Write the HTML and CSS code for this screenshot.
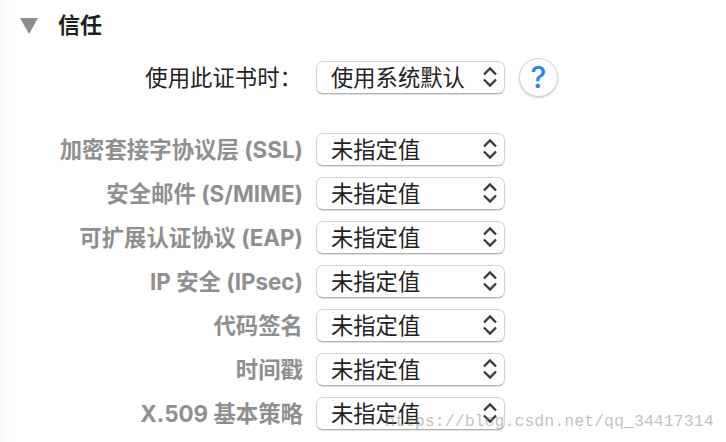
FILE: index.html
```html
<!DOCTYPE html>
<html lang="zh">
<head>
<meta charset="utf-8">
<title>信任</title>
<link rel="stylesheet" href="styles.css">
</head>
<body>
<main class="panel">
  <header class="head">
    <svg class="tri" width="18" height="16" viewBox="0 0 18 16"><path d="M0 0H18L9 16Z" fill="#8c8c8c"/></svg>
    <h1 class="title">信任</h1>
  </header>
  <div class="row main-row">
    <span class="label dark">使用此证书时：</span>
    <div class="select"><span>使用系统默认</span><svg class="chev" width="16" height="22" viewBox="0 0 16 22"><path d="M2 8.5L8 2.5L14 8.5M2 13.5L8 19.5L14 13.5" fill="none" stroke="#3a3a3a" stroke-width="2.3"/></svg></div>
    <div class="help">?</div>
  </div>
  <div class="list">
    <div class="row"><span class="label">加密套接字协议层 (SSL)</span><div class="select"><span>未指定值</span><svg class="chev" width="16" height="22" viewBox="0 0 16 22"><path d="M2 8.5L8 2.5L14 8.5M2 13.5L8 19.5L14 13.5" fill="none" stroke="#3a3a3a" stroke-width="2.3"/></svg></div></div>
    <div class="row"><span class="label">安全邮件 (S/MIME)</span><div class="select"><span>未指定值</span><svg class="chev" width="16" height="22" viewBox="0 0 16 22"><path d="M2 8.5L8 2.5L14 8.5M2 13.5L8 19.5L14 13.5" fill="none" stroke="#3a3a3a" stroke-width="2.3"/></svg></div></div>
    <div class="row"><span class="label">可扩展认证协议 (EAP)</span><div class="select"><span>未指定值</span><svg class="chev" width="16" height="22" viewBox="0 0 16 22"><path d="M2 8.5L8 2.5L14 8.5M2 13.5L8 19.5L14 13.5" fill="none" stroke="#3a3a3a" stroke-width="2.3"/></svg></div></div>
    <div class="row"><span class="label">IP 安全 (IPsec)</span><div class="select"><span>未指定值</span><svg class="chev" width="16" height="22" viewBox="0 0 16 22"><path d="M2 8.5L8 2.5L14 8.5M2 13.5L8 19.5L14 13.5" fill="none" stroke="#3a3a3a" stroke-width="2.3"/></svg></div></div>
    <div class="row"><span class="label">代码签名</span><div class="select"><span>未指定值</span><svg class="chev" width="16" height="22" viewBox="0 0 16 22"><path d="M2 8.5L8 2.5L14 8.5M2 13.5L8 19.5L14 13.5" fill="none" stroke="#3a3a3a" stroke-width="2.3"/></svg></div></div>
    <div class="row"><span class="label">时间戳</span><div class="select"><span>未指定值</span><svg class="chev" width="16" height="22" viewBox="0 0 16 22"><path d="M2 8.5L8 2.5L14 8.5M2 13.5L8 19.5L14 13.5" fill="none" stroke="#3a3a3a" stroke-width="2.3"/></svg></div></div>
    <div class="row"><span class="label">X.509 基本策略</span><div class="select"><span>未指定值</span><svg class="chev" width="16" height="22" viewBox="0 0 16 22"><path d="M2 8.5L8 2.5L14 8.5M2 13.5L8 19.5L14 13.5" fill="none" stroke="#3a3a3a" stroke-width="2.3"/></svg></div></div>
  </div>
</main>
<div class="mark">https://blog.csdn.net/qq_34417314</div>
</body>
</html>
```

FILE: styles.css
```css
html, body {
  margin: 0;
  width: 726px;
  height: 442px;
  overflow: hidden;
  background: #fff;
}
body {
  position: relative;
  font-family: "Liberation Sans", "Noto Sans CJK SC", sans-serif;
  color: #222;
}
.panel {
  display: flex;
  flex-direction: column;
  padding-top: 13px;
  box-sizing: border-box;
  height: 442px;
  background: linear-gradient(to right, #f7f7f7, #fff 10px);
}
.head {
  display: flex;
  align-items: center;
  height: 26px;
  padding-left: 20px;
}
.tri { display: block; }
.title {
  margin: 0 0 0 20px;
  font-size: 22px;
  font-weight: 700;
  line-height: 26px;
  color: #1e1e1e;
}
.row {
  display: flex;
  align-items: center;
  height: 34px;
}
.main-row { margin-top: 21px; }
.list {
  display: flex;
  flex-direction: column;
  gap: 10px;
  margin-top: 38px;
}
.label {
  box-sizing: border-box;
  width: 303px;
  flex: none;
  margin-right: -1px;
  padding-top: 2px;
  text-align: right;
  font-family: Inter, "Noto Sans CJK SC", sans-serif;
  font-size: 22.4px;
  font-weight: 700;
  line-height: 30px;
  color: #8f8f8f;
  white-space: nowrap;
}
.label.dark {
  width: 302px;
  margin-right: 0;
  font-weight: 400;
  color: #222;
}
.select {
  box-sizing: border-box;
  display: flex;
  align-items: center;
  justify-content: space-between;
  width: 189px;
  height: 33px;
  margin-left: 14px;
  padding: 0 6px 0 14px;
  background: #fff;
  border: 1px solid #d6d6d6;
  border-bottom-color: #b0b0b0;
  border-radius: 7px;
  box-shadow: 0 1px 1px rgba(0,0,0,.12);
  font-size: 22.3px;
  line-height: 30px;
  color: #222;
  white-space: nowrap;
}
.select span { padding-top: 4px; }
.chev { display: block; flex: none; }
.help {
  box-sizing: border-box;
  width: 39px;
  height: 39px;
  margin-left: 14px;
  border: 1px solid #d4d4d4;
  border-radius: 50%;
  box-shadow: 0 1px 2px rgba(0,0,0,.2);
  background: #fff;
  color: #2f7ff0;
  font-family: Inter, "Liberation Sans", sans-serif;
  font-size: 30px;
  font-weight: 500;
  line-height: 36px;
  text-align: center;
}
.mark {
  position: absolute;
  left: 385px;
  top: 412px;
  font-family: "Liberation Mono", monospace;
  font-size: 16.6px;
  line-height: 20px;
  color: rgba(130,130,130,.5);
  white-space: nowrap;
}
```
